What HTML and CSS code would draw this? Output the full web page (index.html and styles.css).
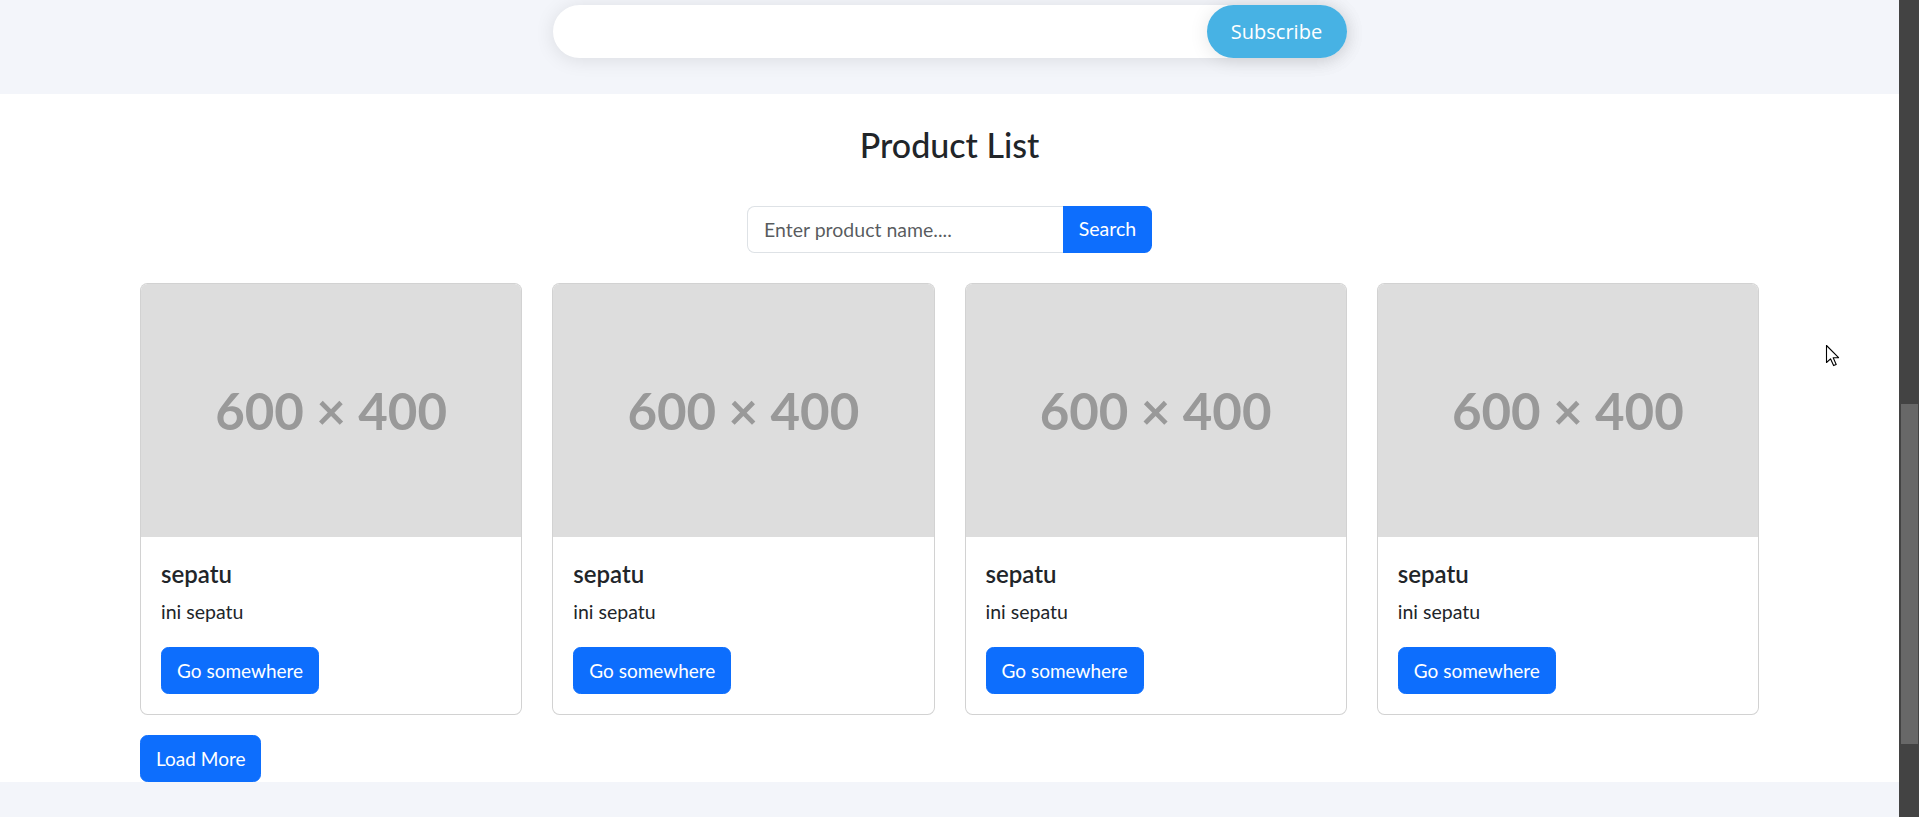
FILE: index.html
```html
<!DOCTYPE html>
<html lang="en">
<head>
<meta charset="utf-8">
<title>Product List</title>
<link rel="stylesheet" href="styles.css">
</head>
<body>
<div class="page">
  <section class="newsletter">
    <form class="nl-form">
      <input class="nl-input" type="email" aria-label="Email">
      <button class="nl-btn" type="button">Subscribe</button>
    </form>
  </section>

  <section class="products">
    <h2 class="title">Product List</h2>
    <form class="search">
      <input class="search-input" type="text" placeholder="Enter product name....">
      <button class="search-btn" type="button">Search</button>
    </form>

    <div class="container">
      <div class="grid">
        <div class="card">
          <div class="card-img">600 × 400</div>
          <div class="card-body">
            <h5 class="card-title">sepatu</h5>
            <p class="card-text">ini sepatu</p>
            <a class="btn" href="#">Go somewhere</a>
          </div>
        </div>
        <div class="card">
          <div class="card-img">600 × 400</div>
          <div class="card-body">
            <h5 class="card-title">sepatu</h5>
            <p class="card-text">ini sepatu</p>
            <a class="btn" href="#">Go somewhere</a>
          </div>
        </div>
        <div class="card">
          <div class="card-img">600 × 400</div>
          <div class="card-body">
            <h5 class="card-title">sepatu</h5>
            <p class="card-text">ini sepatu</p>
            <a class="btn" href="#">Go somewhere</a>
          </div>
        </div>
        <div class="card">
          <div class="card-img">600 × 400</div>
          <div class="card-body">
            <h5 class="card-title">sepatu</h5>
            <p class="card-text">ini sepatu</p>
            <a class="btn" href="#">Go somewhere</a>
          </div>
        </div>
      </div>
      <button class="btn load" type="button">Load More</button>
    </div>
  </section>
</div>

<div class="scrollbar"><div class="scroll-thumb"></div></div>

<svg class="cursor" width="16" height="24" viewBox="0 0 16 24" aria-hidden="true">
  <path d="M1.5 1.5 L1.5 18.5 L5.5 14.8 L8.6 21.6 L11.2 20.4 L8.2 13.8 L13.6 13.6 Z" fill="#fff" stroke="#000" stroke-width="1.1" stroke-linejoin="round"/>
</svg>
</body>
</html>
```

FILE: styles.css
```css
html, body {
  margin: 0;
  padding: 0;
  height: 100%;
  overflow: hidden;
}

body {
  display: flex;
  font-family: "Lato", "Liberation Sans", sans-serif;
  color: #212529;
  background: #f3f5fa;
}

.page {
  flex: 1;
  min-width: 0;
  height: 817px;
  overflow: hidden;
  background: #f3f5fa;
}

/* newsletter */
.newsletter {
  height: 94px;
  box-sizing: border-box;
  padding-top: 5px;
  display: flex;
  justify-content: center;
}

.nl-form {
  width: 794px;
  height: 53px;
  margin: 0;
  background: #fff;
  border-radius: 50px;
  box-shadow: 0 2px 19px rgba(0, 0, 0, 0.1);
  display: flex;
}

.nl-input {
  flex: 1;
  min-width: 0;
  border: 0;
  background: transparent;
  outline: none;
  padding: 0 20px;
}

.nl-btn {
  width: 140px;
  border: 0;
  border-radius: 50px;
  background: #47b2e4;
  color: #fff;
  font-family: "Open Sans", "Liberation Sans", sans-serif;
  font-size: 20px;
  padding: 0;
  box-shadow: 0 2px 19px rgba(0, 0, 0, 0.1);
}

/* products */
.products {
  background: #fff;
  padding-top: 31px;
}

.title {
  margin: 0;
  text-align: center;
  font-size: 34px;
  line-height: 40.8px;
  font-weight: 500;
  color: #212529;
}

.search {
  display: flex;
  justify-content: center;
  margin: 40px 0 0;
  height: 47px;
}

.search-input {
  width: 316px;
  box-sizing: border-box;
  border: 1px solid #dee2e6;
  border-right: 0;
  border-radius: 7.5px 0 0 7.5px;
  padding: 0 16px;
  font-family: "Lato", "Liberation Sans", sans-serif;
  font-size: 19.5px;
  color: #212529;
  outline: none;
}

.search-input::placeholder {
  color: rgba(33, 37, 41, 0.75);
}

.search-btn {
  width: 89px;
  border: 0;
  border-radius: 0 7.5px 7.5px 0;
  background: #0d6efd;
  color: #fff;
  font-family: "Lato", "Liberation Sans", sans-serif;
  font-size: 19.5px;
  padding: 0 0 2px;
}

.container {
  padding: 30px 140px 0;
}

.grid {
  display: grid;
  grid-template-columns: repeat(4, 1fr);
  gap: 30px;
}

.card {
  border: 1px solid rgba(0, 0, 0, 0.175);
  border-radius: 7.5px;
  overflow: hidden;
  background: #fff;
}

.card-img {
  aspect-ratio: 3 / 2;
  background: #dddddd;
  color: #999999;
  display: flex;
  align-items: center;
  justify-content: center;
  font-size: 51px;
  font-weight: 700;
}

.card-body {
  padding: 20px;
}

.card-title {
  margin: 0 0 10px;
  padding-top: 2px;
  height: 28px;
  font-size: 24px;
  line-height: 30px;
  font-weight: 600;
}

.card-text {
  margin: 0 0 20px;
  font-size: 19.5px;
  line-height: 30px;
}

.btn {
  display: inline-block;
  box-sizing: border-box;
  height: 47px;
  padding: 0 15px;
  border: 1px solid #0d6efd;
  border-radius: 7.5px;
  background: #0d6efd;
  color: #fff;
  font-family: "Lato", "Liberation Sans", sans-serif;
  font-size: 19px;
  line-height: 45px;
  text-decoration: none;
}

.load {
  display: block;
  margin-top: 20px;
}

/* fake scrollbar */
.scrollbar {
  width: 20px;
  flex: none;
  height: 817px;
  background: #434343;
  box-sizing: border-box;
  padding: 404px 1px 0 2px;
}

.scroll-thumb {
  height: 340px;
  background: #686868;
}

.cursor {
  position: fixed;
  left: 1825px;
  top: 344px;
}
```
